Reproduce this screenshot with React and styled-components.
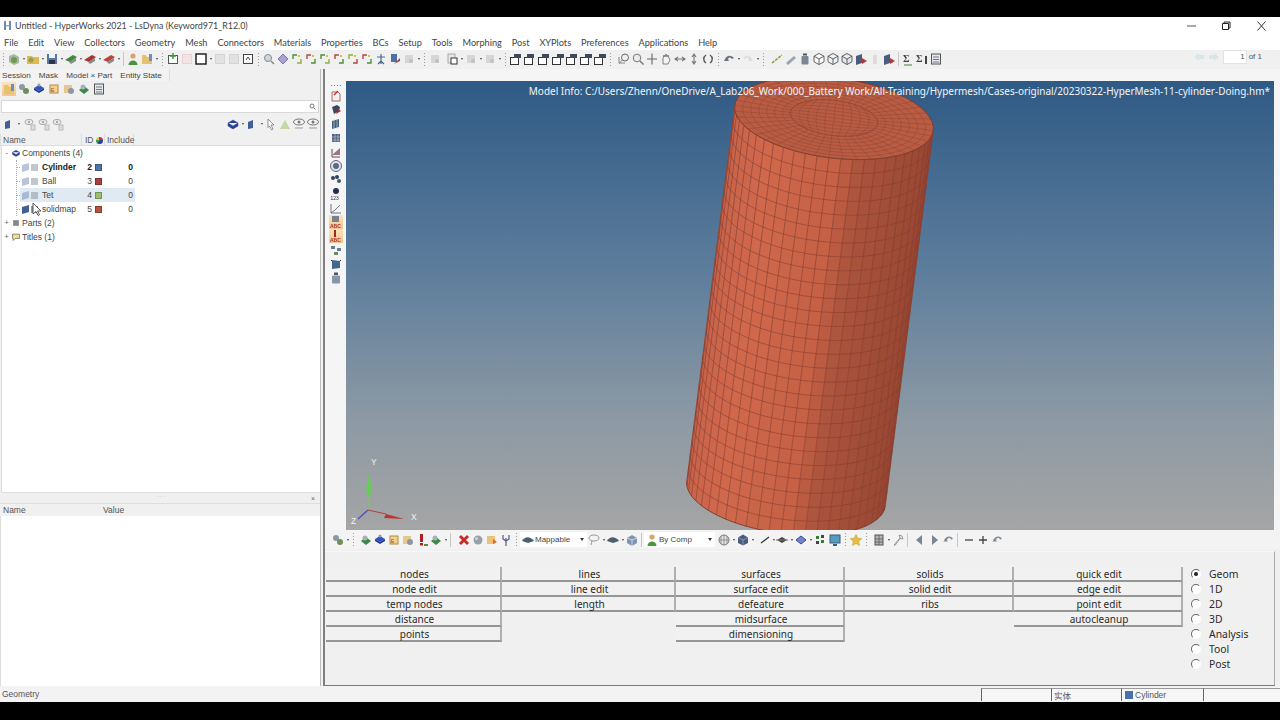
import React from "react";
import styled, { createGlobalStyle } from "styled-components";

const Global = createGlobalStyle`
  html, body { margin: 0; padding: 0; background: #000; }
  #root { width: 1280px; height: 720px; overflow: hidden; }
`;

const Frame = styled.div`
  width: 1280px; height: 720px; padding: 17px 0 18px; box-sizing: border-box;
  background: #000; display: flex; flex-direction: column; position: relative;
  font-family: "Liberation Sans", Arial, sans-serif; color: #333;
`;
const TitleBar = styled.div`
  height: 17px; background: #fff; display: flex; align-items: center; flex: none;
  padding: 0 11px 0 3px; font: 8.9px Lato, sans-serif; color: #444; gap: 3px;
`;
const TitleText = styled.span`flex: 1;`;
const WinControls = styled.div`display: flex; gap: 21px;`;
const MenuBar = styled.div`
  height: 16px; background: #fff; display: flex; align-items: center; flex: none;
  padding-left: 4px; gap: 9.9px; font: 9.2px Lato, sans-serif; color: #444;
`;
const MenuItem = styled.span`white-space: nowrap;`;
const Tool = styled.div`
  display: flex; align-items: center; flex: none; height: ${p => p.$h || 19}px; box-sizing: border-box;
  background: ${p => p.$bg || "transparent"}; padding-left: ${p => p.$pl || 0}px; padding-bottom: ${p => p.$pb || 0}px;
`;
const Spacer = styled.div`flex: 1;`;
const Glyph = styled.svg`
  width: 14px; height: 14px; flex: none; display: block; filter: blur(0.25px);
  background: ${p => p.$on ? "linear-gradient(#f8e4c2,#f2c58a)" : "transparent"};
`;
const Dot = styled.span`
  width: ${p => p.$w || 5}px; flex: none; display: flex; justify-content: center;
  &::after { content: ""; border-top: 2px solid #444; border-left: 1.5px solid transparent; border-right: 1.5px solid transparent; }
`;
const Grip = styled.span`
  width: 7px; height: 13px; flex: none;
  background: repeating-linear-gradient(#9a9a9a 0 1px, transparent 1px 3px) 3px 0 / 1px 100% no-repeat;
`;
const Sep = styled.span`
  width: 5px; height: 14px; flex: none;
  background: linear-gradient(#c8c8c8,#c8c8c8) 2px 0 / 1px 100% no-repeat;
`;
const Gap = styled.span`width: ${p => p.$w || 3}px; flex: none;`;
const Pager = styled.div`
  display: flex; align-items: center; gap: 1px; padding: 0 18px 5px 0;
  font: 8px "Liberation Sans", sans-serif; color: #555;
`;
const PagerInput = styled.span`
  background: #fff; border: 1px solid #e2e2e2; text-align: right;
  line-height: 12px; padding-right: 1px; box-sizing: border-box; margin: 0 1px; height: 14px; width: 24px;
`;
const Body = styled.div`display: flex; flex: 1; min-height: 0; background: #f0f0f0;`;
const LeftPanel = styled.div`
  width: 321px; box-sizing: border-box; flex: none; display: flex; flex-direction: column; border-right: 1px solid #bcbcbc;
`;
const Tabs = styled.div`
  height: 12px; display: flex; width: 170px; font-size: 8.1px; line-height: 13px; background: #f3f3f3;
  padding-left: 2px; box-sizing: border-box; gap: 8px; border-right: 1px solid #ddd; flex: none; color: #444;
`;
const Tab = styled.span`white-space: nowrap;`;
const SearchBox = styled.div`
  height: 13px; margin: 3px 1px 4px 1px; background: #fff; border: 1px solid #d8d8d8; box-sizing: border-box;
  display: flex; align-items: center; justify-content: flex-end; padding-right: 2px; flex: none;
`;
const TableHead = styled.div`
  height: 12px; margin-top: 3px; background: #f0f0f0; display: flex; align-items: center; flex: none; box-sizing: border-box;
  font-size: 8.5px; color: #555; border-bottom: 1px solid #dedede; border-left: 1px solid #ddd;
`;
const HeadCell = styled.span`
  width: ${p => p.$w}px; padding: 1px 0 0 ${p => p.$pl || 2}px; box-sizing: border-box; height: 12px; line-height: 11px;
  border-right: 1px solid #dcdcdc; display: flex; align-items: center; gap: 2px;
`;
const Pie = styled.span`
  width: 7px; height: 7px; border-radius: 50%;
  background: conic-gradient(#c33 0 25%, #2a3f9a 25% 60%, #3c9a3c 60% 80%, #e8c040 80%);
`;
const Tree = styled.div`
  flex: 1; background: #fff; position: relative; margin-left: 1px; padding-top: 0; font-size: 8.5px; color: #444;
  border-left: 1px solid #ddd; border-bottom: 1px solid #ddd;
`;
const Group = styled.div`
  height: 14px; display: flex; align-items: center; padding-left: 2px; gap: 1px;
`;
const Toggle = styled.span`
  width: 5px; text-align: center; font-size: 8px; line-height: 8px; color: #666; flex: none;
`;
const SmallIcon = styled.svg`width: 10px; height: 10px; flex: none; filter: blur(0.2px); margin-left: 1px;`;
const Children = styled.div`margin-left: 14px; border-left: 1px dotted #aaa;`;
const Row = styled.div`
  margin-left: 3px; width: 115px; height: 14px; box-sizing: border-box; padding-left: 2px;
  display: grid; grid-template-columns: 20px 40px 10px 10px 31px; align-items: center;
  background: ${p => p.$hl ? "#dfeaf2" : "transparent"};
  font-weight: ${p => p.$bold ? 700 : 400}; color: ${p => p.$bold ? "#222" : "#444"};
  position: relative;
  &::before { content: ""; position: absolute; left: -3px; top: 7px; width: 3px; border-top: 1px dotted #aaa; }
`;
const RowIcons = styled.div`display: flex; gap: 2px; opacity: ${p => p.$active ? 1 : 0.55};`;
const Mini = styled.span`
  width: 7px; height: 7px; flex: none; background: ${p => p.$c};
  transform: ${p => p.$skew ? "skewY(-15deg)" : "none"};
`;
const RowId = styled.span`text-align: right;`;
const Swatch = styled.span`
  margin-left: 3px; background: ${p => p.$c}; border: 1px solid rgba(0,0,0,.25); box-sizing: content-box;
  width: 5px; height: 5px;
`;
const RowInc = styled.span`text-align: right;`;
const Handle = styled.div`
  height: 10px; flex: none; display: flex; align-items: flex-start; justify-content: space-between; padding: 0 5px 0 157px;
  font-size: 7px; color: #666; line-height: 8px;
`;
const HandleDots = styled.span`letter-spacing: 1px; color: #bbb;`;
const HandleClose = styled.span`line-height: 9px; margin-top: 1px;`;
const ValueHead = styled.div`
  height: 13px; box-sizing: border-box; flex: none; display: flex; align-items: center; font-size: 8.5px; color: #555; padding-left: 3px;
  border-top: 1px solid #dedede; background: #f0f0f0;
`;
const ValueName = styled.span`width: 100px;`;
const ValueBody = styled.div`height: 170px; flex: none; background: #fff; border-left: 1px solid #ddd;`;
const Divider = styled.div`width: 4px; flex: none; background: linear-gradient(#808080,#808080) 2px 0 / 2px 100% no-repeat #f3f3f3;`;
const Right = styled.div`flex: 1; display: flex; flex-direction: column; min-width: 0;`;
const ViewArea = styled.div`
  height: 461px; flex: none; display: flex; padding: 12px 6px 0 0; box-sizing: border-box; background: #f5f5f5;
`;
const SideBar = styled.div`
  width: 21px; box-sizing: border-box; flex: none; display: flex; flex-direction: column; align-items: center;
`;
const SideGrip = styled.div`
  height: 8px; width: 10px; flex: none;
  background: repeating-linear-gradient(90deg,#777 0 1px,transparent 1px 3px) 0 4px / 100% 1px no-repeat;
`;
const SideIcon = styled.div`height: 14px; flex: none;`;
const Viewport = styled.div`
  flex: 1; height: 449px; position: relative; overflow: hidden;
  background: linear-gradient(#2f5a85 0%, #5d7d9c 42%, #8c99a4 75%, #a5a5a5 100%);
`;
const ViewSvg = styled.svg`display: block; width: 100%; height: 100%;`;
const ModelInfo = styled.div`
  position: absolute; top: 3px; right: 4px; color: #f2f5f8; white-space: nowrap;
  font: 9.97px "Noto Sans", sans-serif;
`;
const Field = styled.div`
  width: ${p => p.$w}px; height: 15px; background: #fff; display: flex; align-items: center; flex: none;
  font: 8px "Liberation Sans", sans-serif; color: #444; position: relative; padding-left: 1px; box-sizing: border-box;
`;
const Caret = styled.span`
  margin-left: auto; margin-right: 3px; border-top: 3px solid #333; border-left: 2px solid transparent; border-right: 2px solid transparent;
`;
const PagePanel = styled.div`
  flex: 1; margin-top: 2px; margin-right: 5px; padding: 15px 0 0 1px; display: flex; background: #f0f0f0;
  border-bottom: 1px solid #777; border-right: 1px solid #aaa; border-top: 1px solid #f8f8f8;
  box-sizing: border-box;
`;
const Col = styled.div`width: ${p => p.$w}px; flex: none; display: flex; flex-direction: column;`;
const Btn = styled.div`
  height: 15px; box-sizing: border-box; text-align: center; padding: 1px 0 0 3px;
  font: 10px/13px "Noto Sans", sans-serif; color: #2a2a2a;
  border-bottom: 2px solid #969696; border-right: 2px solid #b0b0b0; background: #f1f1f1;
`;
const Radios = styled.div`margin: -1px 0 0 8px; display: flex; flex-direction: column;`;
const RadioRow = styled.div`
  height: 15px; display: flex; align-items: center; gap: 8px; font: 10.4px "Noto Sans", sans-serif; color: #2a2a2a;
`;
const Radio = styled.span`
  width: 10px; height: 10px; border-radius: 50%; box-sizing: border-box; background: #fff; flex: none; position: relative;
  border: 1px solid; border-color: #666 transparent transparent #666;
  &::after {
    content: ""; position: absolute; left: 2px; top: 2px; width: 4px; height: 4px; border-radius: 50%;
    background: ${p => p.$on ? "#222" : "transparent"};
  }
`;
const StatusBar = styled.div`
  height: 16px; flex: none; display: flex; align-items: center; background: #f3f3f3;
  font-size: 8.5px; color: #555;
`;
const StatusLabel = styled.span`width: 981px; padding-left: 2px; box-sizing: border-box;`;
const StatusCell = styled.span`
  width: ${p => p.$w}px; height: 13px; box-sizing: border-box; border-left: 1px solid #666; border-top: 1px solid #999;
  display: flex; align-items: center; gap: 2px; padding-left: 2px; flex: none;
  font-family: "Liberation Sans", "Noto Sans CJK SC", sans-serif; background: #f6f6f6;
`;
const CompSquare = styled.span`width: 8px; height: 8px; background: #4a70a8; margin-left: 1px; flex: none;`;
const Pointer = styled.svg`position: absolute; left: 32px; top: 202px; width: 10px; height: 14px;`;
const Logo = styled.svg`width: 9px; height: 11px; flex: none;`;

const box = (f, s) => <rect x="2.5" y="2.5" width="9" height="9" fill={f} stroke={s} />;
const wedge = (c) => <><path d="M1 8l8-5 4 2-7 5z" fill={c} /><path d="M5 10l7-4v3l-5 3z" fill="#8a8a8a" /></>;
const corner = (a, b) => <><path d="M3 7V3h4" fill="none" stroke={a} strokeWidth="1.4" /><path d="M11 7v4H7" fill="none" stroke={b} strokeWidth="1.4" /><rect x="8" y="3" width="2" height="2" fill="#d8c040" /></>;
const view = (t) => <><rect x="1.5" y="5.5" width="8" height="7" fill="#fff" stroke="#333" /><rect x={t} y="2" width="7" height="4" fill="#3d4a5c" /></>;
const cube = (c) => <path d="M7 1.5l5 2.7v5.6L7 12.5 2 9.800V4.200zM2 4.200l5 2.800 5-2.800M7 7v5.500" fill={c} stroke="#555" strokeWidth=".9" />;

const ICONS = {
  model: <><path d="M2 4l5-2 5 3v6l-5 2-5-3z" fill="#a8b6aa" /><circle cx="7" cy="8" r="3" fill="#6c9c4a" /></>,
  open: <><path d="M1 4h5l1 1h6v7H1z" fill="#e3b84f" /><circle cx="5" cy="8" r="2.500" fill="#86a45a" /></>,
  save: <><rect x="2" y="2" width="10" height="10" fill="#5677a8" /><rect x="4" y="2" width="6" height="4" fill="#eef2f7" /><rect x="4" y="8" width="6" height="4" fill="#334" /></>,
  wg: wedge("#3f8a3a"), wr: wedge("#a5362f"), wp: wedge("#b8453c"),
  person: <><circle cx="7" cy="4" r="2.600" fill="#d8a56a" /><path d="M2.500 13c0-6 9-6 9 0z" fill="#4d9440" /></>,
  folderp: <><path d="M2 3h4l1 2h5v7H2z" fill="#e8c070" /><rect x="9" y="2" width="3" height="7" fill="#6f8fb5" /></>,
  boxg: <><rect x="2.500" y="3.500" width="9" height="8" fill="#fff" stroke="#555" /><path d="M7 1v6M4 4h6" stroke="#3a9a3a" strokeWidth="1.500" /></>,
  pink: box("#f5e3e4", "#ead3d5"), white: <rect x="2" y="2" width="10" height="10" fill="#fff" stroke="#222" strokeWidth="1.500" />,
  ghost: box("#e2e2e2", "#d4d4d4"),
  boxa: <>{box("#fff", "#444")}<path d="M5 8l2-3 2 3" fill="none" stroke="#444" /></>,
  mag: <><circle cx="6" cy="6" r="3.500" fill="#cfd8e0" stroke="#888" /><path d="M9 9l3 3" stroke="#888" strokeWidth="1.500" /></>,
  dia: <path d="M7 2l5 5-5 5-5-5z" fill="#a8a2d6" stroke="#7d78b4" />,
  c1: corner("#4b8f3a", "#8fb03a"), c2: corner("#b04a3a", "#4b8f3a"), c3: corner("#8fb03a", "#b04a3a"),
  anchor: <path d="M7 2v10M3 5h8M4 12l3-3 3 3" fill="none" stroke="#4a6a8a" strokeWidth="1.200" />,
  bluered: <><rect x="3" y="2" width="6" height="8" fill="#5070a5" /><path d="M6 12l6-3v-3z" fill="#b04040" /></>,
  gray2: <><rect x="3" y="3" width="8" height="8" fill="#d6d6d6" /><circle cx="9" cy="9" r="2" fill="#c0c0c0" /></>,
  clip: <><rect x="3" y="2" width="7" height="9" fill="#e6e6e6" stroke="#aaa" /><rect x="6" y="6" width="6" height="6" fill="#fff" stroke="#333" /></>,
  v1: view(5), v2: view(4), v3: view(6),
  fit: <><circle cx="8" cy="5.500" r="3.500" fill="none" stroke="#666" /><path d="M5 8l-3 4M2 5v6h6" fill="none" stroke="#8a8a8a" /></>,
  zoom: <><circle cx="6" cy="6" r="3.800" fill="#e8edf2" stroke="#777" /><path d="M9 9l3.500 3.500" stroke="#777" strokeWidth="1.400" /></>,
  plus: <path d="M7 1.500v11M2 7h10" stroke="#666" strokeWidth="1.100" />,
  hand: <path d="M4 12V6l1-3 1 2 1-3 1 3 1-2 1 3 1 2-2 4z" fill="#f4f4f4" stroke="#666" strokeWidth=".8" />,
  lr: <path d="M2 7h10M9 5l3 2-3 2M5 5L2 7l3 2" fill="none" stroke="#777" strokeWidth="1.100" />,
  ud: <path d="M7 2v10M5 5l2-3 2 3M5 9l2 3 2-3" fill="none" stroke="#777" strokeWidth="1.100" />,
  rot: <path d="M5 3C2 5 2 9 5 11M9 3c3 2 3 6 0 8" fill="none" stroke="#555" strokeWidth="1.400" />,
  undo: <path d="M3 7c2-4 6-4 9-1l-2 1c-2-2-3-2-4 0l1 2-5 0z" fill="#6c7680" />,
  redo: <path d="M11 7C9 3 5 3 2 6l2 1c2-2 3-2 4 0L7 9l5 0z" fill="#dedede" />,
  line: <path d="M2 11l10-8" stroke="#8a9a30" strokeWidth="1.500" strokeDasharray="3 1" />,
  bar: <path d="M2 11l8-7 2 2-8 7z" fill="#9aa4ae" />,
  weight: <><rect x="5" y="1.500" width="4" height="2" fill="#555" /><rect x="3.500" y="4" width="7" height="8.500" rx="1" fill="#7b8794" /></>,
  cube: cube("#fff"), cubed: cube("#eef1f4"), cubeb: cube("#dfe6ee"),
  cuber: <><path d="M2 4l6-2v9l-6 2z" fill="#4a5d80" /><path d="M8 6l5 3-5 3z" fill="#b03a3a" /></>,
  ghostb: <path d="M5 3h4v9H5z" fill="#dcdcdc" />,
  sigma: <><text x="2" y="10" fontSize="10" fontFamily="Liberation Serif" fontWeight="700" fill="#3a4a3a">Σ</text><path d="M3 13h8" stroke="#3a8a3a" /></>,
  sigma2: <><text x="1" y="10" fontSize="10" fontFamily="Liberation Serif" fontWeight="700" fill="#3a4a3a">Σ</text><rect x="10" y="4" width="2" height="8" fill="#444" /></>,
  note: <><rect x="2.500" y="2" width="9" height="10" fill="#e4e8ec" stroke="#555" /><path d="M4 5h6M4 7.500h6M4 10h6" stroke="#778" /></>,
  arrows: <path d="M2 7l5-4v2h5v4H7v2z" fill="#d8e6ea" />,
  arrowr: <path d="M12 7L7 3v2H2v4h5v2z" fill="#d8e6ea" />,
  tri: <path d="M2 12l5-9 5 9z" fill="#c5d6a0" />,
  cursor: <path d="M4 2l6 6H7l2 4-1.500 .8L5.500 9 4 10.500z" fill="#fff" stroke="#777" strokeWidth=".8" />,
  eye: <><ellipse cx="7" cy="5" rx="5.500" ry="3" fill="#f4f4f4" stroke="#777" /><circle cx="7" cy="5" r="1.500" fill="#777" /><path d="M3 11h8" stroke="#999" /></>,
  eye2: <><ellipse cx="5" cy="5" rx="4" ry="2.600" fill="#efefef" stroke="#aaa" /><circle cx="5" cy="5" r="1.200" fill="#aaa" /><rect x="7" y="8" width="4" height="5" fill="#ddd" stroke="#bbb" /></>,
  comp: <path d="M7 3l5 3-5 3-5-3zM2 6v3l5 3 5-3V6" fill="#2a3f95" stroke="#2a3f95" strokeWidth=".5" />,
  hier: <><circle cx="5" cy="5" r="3" fill="#8a97a5" /><circle cx="9" cy="9" r="3" fill="#6f8f5a" /></>,
  compg: <><path d="M2 8l5-4 5 4-5 4z" fill="#3a8a45" /><circle cx="6" cy="5" r="2.500" fill="#a8b0b8" /></>,
  disk: <><path d="M7 3l5 3-5 3-5-3z" fill="#2f52c0" /><path d="M2 6v2l5 3 5-3V6l-5 3z" fill="#1e3690" /><circle cx="7" cy="3" r="1.500" fill="#999" /></>,
  tag: <><rect x="3" y="3" width="8" height="8" fill="#f2d28a" stroke="#b08a4a" /><text x="4" y="10" fontSize="5" fill="#a33">E</text></>,
  tag2: <><rect x="2" y="3" width="8" height="8" fill="#e6c88e" /><circle cx="9" cy="9" r="3" fill="#8a97a5" /></>,
  flag: <><rect x="5" y="1" width="3" height="8" fill="#b02020" /><rect x="5" y="10" width="3" height="2.500" fill="#b02020" /><path d="M9 12h4" stroke="#5a8a3a" strokeWidth="2" /></>,
  cross: <path d="M3 3l8 8M11 3l-8 8" stroke="#c92a2a" strokeWidth="3" />,
  ball: <><circle cx="7" cy="7" r="4.500" fill="#98a0a8" /><circle cx="5.500" cy="5.500" r="1.500" fill="#ced2d6" /></>,
  fire: <><rect x="2" y="3" width="8" height="8" fill="#ecc27a" /><path d="M8 11l4-2-4-3z" fill="#d86a2a" /></>,
  fork: <path d="M7 13V5M4 2v4l3 2 3-2V2" fill="none" stroke="#558" strokeWidth="1.200" />,
  lasso: <><ellipse cx="7" cy="5" rx="5" ry="3" fill="none" stroke="#999" /><path d="M5 8l-1 4" stroke="#999" /></>,
  mound: <path d="M1 8c3-5 8-5 12 0l-6 2z" fill="#4a6072" />,
  hex: <><path d="M7 2l5 3v5l-5 3-5-3V5z" fill="#7f93b2" /><path d="M7 7l5-2M7 7v6M7 7L2 5" stroke="#dfe6ee" strokeWidth=".8" /></>,
  net: <><circle cx="7" cy="7" r="5" fill="#e4e4e4" stroke="#777" /><path d="M2 7h10M7 2v10M4 3v8M10 3v8" stroke="#777" strokeWidth=".7" /></>,
  hexd: <><path d="M7 1.500l5 3v5.500l-5 2.500-5-2.500V4.500z" fill="#4c5c80" /><path d="M7 7l5-2.500M7 7v5M7 7L2 4.500" stroke="#9ab" strokeWidth=".7" /></>,
  seg: <path d="M3 10l8-6" stroke="#333" strokeWidth="1.300" />,
  dd: <><path d="M7 4l5 3-5 3-5-3z" fill="#444" /><path d="M1 7h12" stroke="#777" /></>,
  db: <path d="M7 3l5 4-5 4-5-4z" fill="#7b80cc" stroke="#33478f" />,
  blk: <><rect x="3" y="3" width="3" height="3" fill="#3a7a3a" /><rect x="8" y="2" width="3" height="3" fill="#444" /><rect x="3" y="8" width="3" height="3" fill="#444" /><rect x="8" y="7" width="3" height="3" fill="#3a7a3a" /></>,
  mon: <><rect x="2" y="2" width="10" height="8" fill="#5a9ac0" stroke="#3a5a7a" /><path d="M5 12h4" stroke="#3a5a7a" strokeWidth="2" /></>,
  star: <path d="M7 1.500l1.700 3.700 4 .5-3 2.700.8 4L7 10.400 3.500 12.400l.8-4-3-2.700 4-.5z" fill="#e8c040" stroke="#b89020" strokeWidth=".5" />,
  grid: <><rect x="3" y="2" width="8" height="10" fill="#aeb4ba" stroke="#555" /><path d="M3 6h8M3 9h8M7 2v10" stroke="#555" strokeWidth=".7" /></>,
  wrench: <path d="M3 12l6-7-1-3 3 1 1 3-3-.5-5 7z" fill="#e2e4e6" stroke="#888" strokeWidth=".8" />,
  left: <path d="M9 2v10L3 7z" fill="#7a8694" />,
  rightt: <path d="M5 2v10l6-5z" fill="#7a8694" />,
  minus: <path d="M3 7h8" stroke="#444" strokeWidth="1.300" />,
  plusb: <path d="M7 3v8M3 7h8" stroke="#444" strokeWidth="1.300" />,
  back: <path d="M3 8c1-5 7-6 9-2l-2 .5c-1-2-3-2-4 .5l1 1.500H2z" fill="#7f8c96" />,
  s1: <><path d="M3 3h6l2 2v7H3z" fill="#f6f0f0" stroke="#a66" /><path d="M9 2L5 6" stroke="#b33" strokeWidth="1.300" /></>,
  s2: <><path d="M3 4l5-2 3 2-1 4-5 3z" fill="#39495f" /><path d="M7 11l5-3-3-2z" fill="#c02020" /></>,
  s3: <><path d="M3 4l7-2v8l-7 2z" fill="#46607f" /><path d="M5 2v10M8 2v10" stroke="#cfd7e0" strokeWidth=".6" /></>,
  s4: <><rect x="3" y="3" width="8" height="8" fill="#4e6280" /><path d="M3 6h8M3 9h8M6 3v8M9 3v8" stroke="#dde" strokeWidth=".5" /></>,
  s5: <><path d="M3 4v8h8" stroke="#644" fill="none" /><path d="M3 10l8-7v7z" fill="#967a7a" /></>,
  s6: <><circle cx="7" cy="7" r="5.500" fill="#dfe4ec" stroke="#667" /><circle cx="7" cy="7" r="3" fill="#56688a" /></>,
  s7: <><circle cx="4" cy="5" r="2" fill="#2c4460" /><circle cx="8" cy="4" r="2" fill="#2c4460" /><circle cx="10" cy="8" r="2" fill="#3f5a70" /></>,
  s8: <><circle cx="7" cy="4" r="3" fill="#203050" /><text x="1.500" y="13" fontSize="5" fill="#334" fontFamily="Liberation Sans">123</text></>,
  s9: <path d="M2 12l4-3 5-5M2 3v9h10" fill="none" stroke="#667" strokeWidth=".9" />,
  abc1: <><rect x="3" y="1" width="7" height="6" fill="#7a8090" /><text x="1" y="12.500" fontSize="5" fontWeight="700" fill="#a33" fontFamily="Liberation Sans">ABC</text></>,
  abc2: <><rect x="5" y="1" width="2" height="7" fill="#b02020" /><text x="1" y="12.500" fontSize="5" fontWeight="700" fill="#a33" fontFamily="Liberation Sans">ABC</text></>,
  s12: <><rect x="2" y="3" width="4" height="3" fill="#6a7a90" /><rect x="8" y="5" width="4" height="3" fill="#6a7a90" /><rect x="5" y="9" width="4" height="3" fill="#6a8a70" /></>,
  s13: <><path d="M3 3l8 1v7l-8 1z" fill="#46658c" /><path d="M3 3l-1 1M11 4l1-1" stroke="#222" /></>,
  s14: <><rect x="5" y="1.500" width="4" height="2.500" fill="#556" /><rect x="3" y="4.500" width="8" height="8" rx="1" fill="#8795a8" /></>,
  tr1: <path d="M3 5l5-2v8l-5 1z" fill="#3f5f96" />,
};

const Icon = ({ k, on }) => <Glyph viewBox="0 0 14 14" $on={on}>{ICONS[k]}</Glyph>;

function toolbar(spec) {
  return spec.split(" ").map((t, i) => {
    if (t === "|") return <Grip key={i} />;
    if (t === ".") return <Dot key={i} />;
    if (t === ",") return <Dot key={i} $w={3} />;
    if (t === "/") return <Sep key={i} />;
    if (t === "_") return <Gap key={i} />;
    if (t === "~") return <Gap key={i} $w={1} />;
    return <Icon key={i} k={t} />;
  });
}

const TOP = "| model . open . save . wg . wr . wp . / person folderp . | boxg pink white . ghost ghost boxa | mag dia c1 c2 c1 c2 c3 c2 anchor bluered gray2 . | gray2 _ clip . gray2 . gray2 . | v1 v2 v1 v3 v1 v3 v3 | _ fit zoom plus hand lr ud rot | undo . redo . | _ line bar weight cube cubed cubeb cuber ghostb cuber / sigma sigma2 note";
const BOTTOM = "hier . | ~ ~ compg disk tag tag2 flag compg . / _ ~ cross ball fire fork |";
const BOTTOM2 = "lasso . mound . hex /";
const BOTTOM3 = "net . hexd . _ seg , dd . db . blk ~ mon | star | ~ ~ grid . wrench / _ left rightt back / ~ ~ minus plusb back";

const MENUS = ["File","Edit","View","Collectors","Geometry","Mesh","Connectors","Materials","Properties","BCs","Setup","Tools","Morphing","Post","XYPlots","Preferences","Applications","Help"];
const SIDE = [["s1"],["s2"],["s3"],["s4"],["s5"],["s6"],["s7"],["s8"],["s9"],["abc1",1],["abc2",1],["s12"],["s13"],["s14"]];
const COLS = [
  [176, ["nodes","node edit","temp nodes","distance","points"]],
  [174, ["lines","line edit","length"]],
  [169, ["surfaces","surface edit","defeature","midsurface","dimensioning"]],
  [169, ["solids","solid edit","ribs"]],
  [169, ["quick edit","edge edit","point edit","autocleanup"]],
];
const RADIOS = ["Geom","1D","2D","3D","Analysis","Tool","Post"];
const COMPS = [
  { name: "Cylinder", id: 2, c: "#4f74a8", bold: true },
  { name: "Ball", id: 3, c: "#a8403f" },
  { name: "Tet", id: 4, c: "#9cc06e", hl: true },
  { name: "solidmap", id: 5, c: "#b5533f", active: true },
];

/* cylinder mesh */
const PHI = 7.2 * Math.PI / 180;
const ell = (cx, cy, r, t) => {
  const a = 100 * r, b = 40 * r;
  return [
    cx + a * Math.cos(t) * Math.cos(PHI) - b * Math.sin(t) * Math.sin(PHI),
    cy + a * Math.cos(t) * Math.sin(PHI) + b * Math.sin(t) * Math.cos(PHI),
  ];
};
const C0 = [834, 118], C1 = [786, 493.5];
const P = (p) => p[0].toFixed(1) + "," + p[1].toFixed(1);
const STOPS = [[0,[148,68,48]],[0.9,[162,78,56]],[1.25,[172,84,60]],[1.5,[198,97,70]],[2.2,[208,104,76]],[2.9,[200,100,75]],[Math.PI,[192,94,72]]];
const shade = (t) => {
  for (let i = 1; i < STOPS.length; i++) {
    if (t <= STOPS[i][0]) {
      const [a, ca] = STOPS[i - 1], [b, cb] = STOPS[i];
      const f = (t - a) / (b - a);
      return `rgb(${ca.map((v, j) => Math.round(v + (cb[j] - v) * f)).join(",")})`;
    }
  }
  return "rgb(192,94,72)";
};
const NCOL = 26, NROW = 27;
const Cylinder = () => {
  const facets = [], cols = [], rows = [];
  for (let i = 0; i < NCOL; i++) {
    const t0 = Math.PI * i / NCOL, t1 = Math.PI * (i + 1) / NCOL;
    const pts = [ell(...C0, 1, t0), ell(...C0, 1, t1), ell(...C1, 1, t1), ell(...C1, 1, t0)].map(P).join(" ");
    facets.push(<polygon key={i} points={pts} fill={shade((t0 + t1) / 2)} stroke={shade((t0 + t1) / 2)} strokeWidth=".4" />);
  }
  for (let i = 1; i < NCOL; i++) {
    const t = Math.PI * i / NCOL;
    cols.push(<line key={i} x1={ell(...C0, 1, t)[0]} y1={ell(...C0, 1, t)[1]} x2={ell(...C1, 1, t)[0]} y2={ell(...C1, 1, t)[1]} />);
  }
  for (let j = 1; j < NROW; j++) {
    const f = j / NROW, c = [C0[0] + (C1[0] - C0[0]) * f, C0[1] + (C1[1] - C0[1]) * f];
    const pts = [];
    for (let i = 0; i <= 40; i++) pts.push(P(ell(c[0], c[1], 1, Math.PI * i / 40)));
    rows.push(<polyline key={j} points={pts.join(" ")} fill="none" />);
  }
  const top = [];
  const CORE = 0.44;
  for (let k = 0; k < 8; k++) {
    const r = CORE + k * 0.08;
    top.push(<ellipse key={"r" + k} cx={C0[0]} cy={C0[1]} rx={100 * r} ry={40 * r} transform={`rotate(7.2 ${C0[0]} ${C0[1]})`} fill="none" />);
  }
  for (let k = 0; k < 44; k++) {
    const t = 2 * Math.PI * k / 44;
    const a = ell(...C0, CORE, t), b = ell(...C0, 1, t);
    top.push(<line key={"s" + k} x1={a[0]} y1={a[1]} x2={b[0]} y2={b[1]} />);
  }
  const mapDisk = (u, v) => {
    const x = u * Math.sqrt(1 - v * v / 2), y = v * Math.sqrt(1 - u * u / 2);
    const r = Math.hypot(x, y) * CORE, t = Math.atan2(y, x);
    return ell(...C0, r, t);
  };
  for (let q = -5; q <= 5; q++) {
    const a = [], b = [];
    for (let s = -10; s <= 10; s++) {
      a.push(P(mapDisk(q / 5, s / 10)));
      b.push(P(mapDisk(s / 10, q / 5)));
    }
    top.push(<polyline key={"a" + q} points={a.join(" ")} fill="none" />);
    top.push(<polyline key={"b" + q} points={b.join(" ")} fill="none" />);
  }
  const e0 = ell(...C0, 1, 0), e1 = ell(...C0, 1, Math.PI), b0 = ell(...C1, 1, 0), b1 = ell(...C1, 1, Math.PI);
  const frontBottom = [];
  for (let i = 0; i <= 40; i++) frontBottom.push(P(ell(...C1, 1, Math.PI * i / 40)));
  return (
    <g>
      {facets}
      <g stroke="#873c2c" strokeWidth=".7" strokeOpacity=".8">{cols}{rows}</g>
      <ellipse cx={C0[0]} cy={C0[1]} rx="100" ry="40" transform={`rotate(7.2 ${C0[0]} ${C0[1]})`} fill="#b95c43" stroke="#7d3a2a" strokeWidth=".8" />
      <g stroke="#87402f" strokeWidth=".5" strokeOpacity=".75">{top}</g>
      <polyline points={frontBottom.join(" ")} fill="none" stroke="#7d3a2a" strokeWidth=".9" />
      <path d={`M${P(e0)}L${P(b0)}M${P(e1)}L${P(b1)}`} stroke="#8a4231" strokeWidth=".8" />
    </g>
  );
};

export default function App() {
  return (
    <Frame>
      <Global />
      <TitleBar>
        <Logo viewBox="0 0 9 11">
          <path d="M1 1h2v9H1zM6 1h2v9H6z" fill="#6a8fb5" /><path d="M3 5h3v1.500H3z" fill="#9ab4cc" />
        </Logo>
        <TitleText>Untitled - HyperWorks 2021 - LsDyna (Keyword971_R12.0)</TitleText>
        <WinControls>
          <svg width="14" height="12" viewBox="0 0 14 12"><path d="M2 6h9" stroke="#555" /></svg>
          <svg width="14" height="12" viewBox="0 0 14 12"><path d="M2.500 3.500h6v6h-6zM4 3.500V2h6v6H8.500" fill="none" stroke="#222" /></svg>
          <svg width="14" height="12" viewBox="0 0 14 12"><path d="M2.500 1.500l8 9M10.500 1.500l-8 9" stroke="#333" /></svg>
        </WinControls>
      </TitleBar>
      <MenuBar>{MENUS.map(m => <MenuItem key={m}>{m}</MenuItem>)}</MenuBar>
      <Tool $bg="#f0f0f0" $pb={1}>
        {toolbar(TOP)}
        <Spacer />
        <Pager>
          <Icon k="arrows" /><Icon k="arrowr" />
          <PagerInput>1</PagerInput>
          <span>of 1</span>
        </Pager>
      </Tool>
      <Body>
        <LeftPanel>
          <Tabs>
            <Tab>Session</Tab>
            <Tab>Mask</Tab>
            <Tab>Model × Part</Tab>
            <Tab>Entity State</Tab>
          </Tabs>
          <Tool $h={16} $pl={2}>
            <Icon k="folderp" on />
            {toolbar("~ hier ~ disk ~ tag ~ tag2 ~ compg ~ note")}
          </Tool>
          <SearchBox>
            <svg width="7" height="7" viewBox="0 0 7 7"><circle cx="3" cy="3" r="2" fill="none" stroke="#777" /><path d="M4.500 4.500l2 2" stroke="#777" /></svg>
          </SearchBox>
          <Tool $h={14} $pl={2}>
            {toolbar("tr1 . _ eye2 eye2 eye2")}
            <Spacer />
            {toolbar("comp . tr1 . cursor tri eye eye")}
          </Tool>
          <TableHead>
            <HeadCell $w={81}>Name</HeadCell>
            <HeadCell $w={23} $pl={3}>ID <Pie /></HeadCell>
            <HeadCell $w={29}>Include</HeadCell>
          </TableHead>
          <Tree>
            <Group>
              <Toggle>-</Toggle>
              <SmallIcon viewBox="0 0 14 14">{ICONS.comp}</SmallIcon>
              <span>Components (4)</span>
            </Group>
            <Children>
              {COMPS.map(c => (
                <Row key={c.name} $hl={c.hl} $bold={c.bold}>
                  <RowIcons $active={c.active}>
                    <Mini $c={c.active ? "#3f5f96" : "#7f95bd"} $skew />
                    <Mini $c="#8f9aa5" />
                  </RowIcons>
                  <span>{c.name}</span>
                  <RowId>{c.id}</RowId>
                  <Swatch $c={c.c} />
                  <RowInc>0</RowInc>
                </Row>
              ))}
            </Children>
            <Group>
              <Toggle>+</Toggle>
              <SmallIcon viewBox="0 0 14 14"><rect x="3" y="3" width="8" height="8" fill="#888" /></SmallIcon>
              <span>Parts (2)</span>
            </Group>
            <Group>
              <Toggle>+</Toggle>
              <SmallIcon viewBox="0 0 14 14"><path d="M2 3h10v6H6l-3 3V9H2z" fill="#f0dc9a" stroke="#665" /></SmallIcon>
              <span>Titles (1)</span>
            </Group>
          </Tree>
          <Handle><HandleDots>···</HandleDots><HandleClose>×</HandleClose></Handle>
          <ValueHead><ValueName>Name</ValueName><span>Value</span></ValueHead>
          <ValueBody />
        </LeftPanel>
        <Divider />
        <Right>
          <ViewArea>
            <SideBar>
              <SideGrip />
              {SIDE.map(([k, on]) => <SideIcon key={k}><Icon k={k} on={on} /></SideIcon>)}
            </SideBar>
            <Viewport>
              <ViewSvg viewBox="346 81 928 449" preserveAspectRatio="none">
                <Cylinder />
                <path d="M369 510L369 490" stroke="#7dc46a" strokeWidth="1.200" />
                <path d="M369 473l3 18-3 6-3-6z" fill="#66cc55" />
                <path d="M368 510l18 4" stroke="#b04040" strokeWidth="1" />
                <path d="M404 519l-18-5-2 4z" fill="#c23030" />
                <path d="M368 510l-10 9" stroke="#5050c0" strokeWidth="1.500" />
                <text x="371" y="465" fontSize="8.500" fill="#eef2f5" fontFamily="Liberation Sans">Y</text>
                <text x="411" y="520" fontSize="8.500" fill="#eef2f5" fontFamily="Liberation Sans">X</text>
                <text x="351" y="524" fontSize="8.500" fill="#eef2f5" fontFamily="Liberation Sans">Z</text>
              </ViewSvg>
              <ModelInfo>Model Info: C:/Users/Zhenn/OneDrive/A_Lab206_Work/000_Battery Work/All-Training/Hypermesh/Cases-original/20230322-HyperMesh-11-cylinder-Doing.hm*</ModelInfo>
            </Viewport>
          </ViewArea>
          <Tool $h={19} $pl={6} $bg="#f3f3f3">
            {toolbar(BOTTOM)}
            <Field $w={67}><Icon k="mound" />Mappable<Caret /></Field>
            {toolbar(BOTTOM2)}
            <Field $w={71}><Icon k="person" />By Comp<Caret /></Field>
            <Gap $w={2} />
            {toolbar(BOTTOM3)}
          </Tool>
          <PagePanel>
            {COLS.map(([w, items], i) => (
              <Col key={i} $w={w}>
                {items.map(b => <Btn key={b}>{b}</Btn>)}
              </Col>
            ))}
            <Radios>
              {RADIOS.map((r, i) => (
                <RadioRow key={r}><Radio $on={i === 0} />{r}</RadioRow>
              ))}
            </Radios>
          </PagePanel>
        </Right>
      </Body>
      <StatusBar>
        <StatusLabel>Geometry</StatusLabel>
        <StatusCell $w={70} />
        <StatusCell $w={70}>实体</StatusCell>
        <StatusCell $w={82}><CompSquare />Cylinder</StatusCell>
        <StatusCell $w={77} />
      </StatusBar>
      <Pointer viewBox="0 0 10 14">
        <path d="M1 1v11l3-2.500 2 4 1.500-.8-2-3.700H9z" fill="#fff" stroke="#333" strokeWidth=".8" />
      </Pointer>
    </Frame>
  );
}
